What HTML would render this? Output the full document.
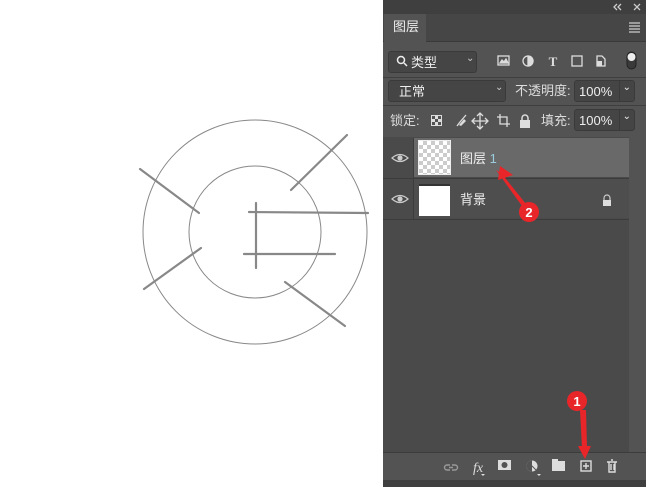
<!DOCTYPE html>
<html><head><meta charset="utf-8"><style>
*{margin:0;padding:0;box-sizing:border-box}
body{width:646px;height:487px;background:#fff;position:relative;overflow:hidden;font-family:"Liberation Sans","Noto Sans CJK SC",sans-serif;font-size:12px;color:#ddd}
.a{position:absolute;line-height:1}
.box{position:absolute;border:1px solid #3a3a3a;background:#454545;border-radius:3px;line-height:1}
</style></head><body>
<svg class="a" style="left:0;top:0" width="383" height="487">
<g fill="none" stroke="#888" stroke-width="1"><circle cx="255" cy="232" r="112"/><circle cx="255" cy="232" r="66"/></g>
<g stroke="#888" stroke-width="2.2" stroke-linecap="round">
<line x1="140" y1="169" x2="199" y2="213"/><line x1="347" y1="135" x2="291" y2="190"/>
<line x1="144" y1="289" x2="201" y2="248"/><line x1="285" y1="282" x2="345" y2="326"/>
<line x1="249" y1="212" x2="368" y2="213"/><line x1="256" y1="203" x2="256" y2="268"/>
<line x1="244" y1="254" x2="335" y2="254"/></g>
</svg>
<div class="a" style="left:383px;top:0;width:263px;height:487px;background:#535353"></div>
<div class="a" style="left:383px;top:0;width:263px;height:14px;background:#3f3f3f"></div>
<div class="a" style="left:383px;top:14px;width:263px;height:28px;background:#464646;border-bottom:1px solid #3a3a3a"></div>
<div class="a" style="left:384px;top:14px;width:42px;height:28px;background:#535353;padding:6px 0 0 9px;font-size:13px;color:#eee">图层</div>
<div class="box" style="left:388px;top:51px;width:89px;height:22px;padding:4px 0 0 22px;font-size:13px;color:#eee">类型</div>
<div class="a" style="left:466px;top:54px;font-size:10px;color:#ccc">⌄</div>
<div class="a" style="left:383px;top:77px;width:263px;height:1px;background:#3f3f3f"></div>
<div class="box" style="left:388px;top:80px;width:118px;height:22px;padding:4px 0 0 10px;font-size:13px;color:#eee">正常</div>
<div class="a" style="left:495px;top:83px;font-size:10px;color:#ccc">⌄</div>
<div class="a" style="left:515px;top:84px;font-size:13px;color:#ddd">不透明度:</div>
<div class="box" style="left:574px;top:80px;width:61px;height:22px;padding:4px 0 0 4px;font-size:13px;color:#eee">100%<span style="position:absolute;left:44px;top:0;width:1px;height:20px;background:#3a3a3a"></span><span style="position:absolute;right:3px;top:2px;font-size:10px">⌄</span></div>
<div class="a" style="left:383px;top:105px;width:263px;height:1px;background:#3f3f3f"></div>
<div class="a" style="left:390px;top:114px;font-size:13px;color:#ddd">锁定:</div>
<div class="a" style="left:541px;top:114px;font-size:13px;color:#ddd">填充:</div>
<div class="box" style="left:574px;top:109px;width:61px;height:22px;padding:4px 0 0 4px;font-size:13px;color:#eee">100%<span style="position:absolute;left:44px;top:0;width:1px;height:20px;background:#3a3a3a"></span><span style="position:absolute;right:3px;top:2px;font-size:10px">⌄</span></div>
<div class="a" style="left:383px;top:137px;width:263px;height:315px;background:#4a4a4a"></div>
<div class="a" style="left:629px;top:137px;width:17px;height:315px;background:#535353"></div>
<div class="a" style="left:413px;top:138px;width:216px;height:39px;background:#696969"></div>
<div class="a" style="left:383px;top:178px;width:246px;height:1px;background:#3c3c3c"></div>
<div class="a" style="left:413px;top:179px;width:216px;height:39px;background:#4e4e4e"></div>
<div class="a" style="left:383px;top:219px;width:246px;height:1px;background:#3c3c3c"></div>
<div class="a" style="left:413px;top:138px;width:1px;height:82px;background:#3c3c3c"></div>
<div class="a" style="left:418px;top:140px;width:33px;height:35px;border:1px solid #eee;background:repeating-conic-gradient(#ccc 0 25%,#fff 0 50%) 0 0/8px 8px"></div>
<div class="a" style="left:419px;top:184px;width:31px;height:32px;background:#fff;border-top:2px solid #333"></div>
<div class="a" style="left:460px;top:152px;font-size:13px;color:#f0f0f0">图层 <span style="color:#9cd">1</span></div>
<div class="a" style="left:460px;top:193px;font-size:13px;color:#f0f0f0">背景</div>
<div class="a" style="left:383px;top:452px;width:263px;height:1px;background:#3c3c3c"></div>
<div class="a" style="left:383px;top:480px;width:263px;height:7px;background:#3f3f3f"></div>
<svg class="a" style="left:383px;top:0" width="263" height="487">
<g fill="none" stroke="#ccc" stroke-width="1.3">
<path d="M234 4l-3 3 3 3M238 4l-3 3 3 3"/><path d="M251 4l6 6M257 4l-6 6"/>
<path d="M246 23h11M246 26h11M246 29h11M246 32h11"/>
</g>
<g fill="none" stroke="#eee" stroke-width="1.5"><circle cx="18" cy="60" r="3.5"/><path d="M21 63l3 3"/></g>
<g fill="none" stroke="#ddd" stroke-width="1.3">
<rect x="115" y="56" width="11" height="9"/><path d="M117 63l2-3 2 2 2-3 2 4z" fill="#ddd"/>
<circle cx="145" cy="61" r="5"/><path d="M145 56a5 5 0 0 1 0 10z" fill="#ddd"/>
<rect x="189" y="56" width="10" height="10"/>
<path d="M214 56h5l3 3v7h-8z"/>
<path d="M83 115l-6 7M77 122l-3 4"/>
<path d="M90 121h14M97 114v14M94 116l3-3 3 3M94 126l3 3 3-3M92 118l-3 3 3 3M102 118l3 3-3 3"/>
<path d="M117 114v10h10M114 117h10v10"/>
</g>
<g fill="#ddd"><text x="170" y="66" font-size="13" font-weight="bold" font-family="Liberation Serif" text-anchor="middle">T</text>
<rect x="214" y="61" width="5" height="5"/>
<rect x="48" y="115" width="11" height="11"/>
<rect x="137" y="120" width="10" height="8"/>
</g>
<g fill="#535353"><rect x="49" y="116" width="3" height="3"/><rect x="55" y="116" width="3" height="3"/><rect x="52" y="119" width="3" height="3"/><rect x="49" y="122" width="3" height="3"/><rect x="55" y="122" width="3" height="3"/></g>
<path d="M139 120v-2a3 3 0 0 1 6 0v2" fill="none" stroke="#ddd" stroke-width="1.5"/>
<path d="M76 125l5-6 2 2-5 5z" fill="#ddd"/>
<rect x="244" y="52" width="9" height="17" rx="4.5" fill="#3a3a3a" stroke="#222"/><circle cx="248.5" cy="57" r="4" fill="#eee"/>
<g fill="none" stroke="#ccc" stroke-width="1.2">
<path d="M9 158q8-7 16 0q-8 7-16 0z"/><circle cx="17" cy="158" r="2" fill="#ccc"/>
<path d="M9 199q8-7 16 0q-8 7-16 0z"/><circle cx="17" cy="199" r="2" fill="#ccc"/>
<rect x="220" y="200" width="8" height="6" fill="#ddd" stroke="none"/><path d="M221 200v-2a3 3 0 0 1 6 0v2"/>
</g>
<g fill="none" stroke="#ddd" stroke-width="1.4">
<path d="M67 465h-3a2.5 2.5 0 0 0 0 5h3M69 465h3a2.5 2.5 0 0 1 0 5h-3M66 467.5h4" stroke="#999"/>
<rect x="198" y="461" width="10" height="10"/><path d="M203 463v6M200 466h6"/>
<path d="M224 462h10M226 462v10h6v-10M228 460h2M228 464v6M231 464v6"/>
</g>
<g fill="#ddd">
<text x="90" y="472" font-size="14" font-style="italic" font-family="Liberation Serif">fx</text>
<rect x="115" y="460" width="13" height="10"/><circle cx="149" cy="466" r="5.5"/><rect x="169" y="461" width="13" height="10"/>
<path d="M98 474h4l-2 2z"/><path d="M154 474h4l-2 2z"/>
</g>
<rect x="169" y="459" width="6" height="3" fill="#ddd"/>
<circle cx="121.5" cy="465" r="3" fill="#535353"/><path d="M149 460.5a5.5 5.5 0 0 0 0 11z" fill="#535353"/><path d="M145 462l8 8" stroke="#535353" stroke-width="1"/>
</svg>
<svg class="a" style="left:0;top:0" width="646" height="487">
<g fill="#e8262a"><polygon points="502,174 496,170 522,206 526,204"/><polygon points="500,166 513,175 498,180"/>
<polygon points="580,410 586,410 587,448 582,448"/><polygon points="578,446 591,446 585,459"/></g>
<circle cx="529" cy="212" r="10" fill="#e8262a"/><circle cx="577" cy="401" r="10" fill="#e8262a"/>
<text x="529" y="217" fill="#fff" font-size="13" font-weight="bold" text-anchor="middle" font-family="Liberation Sans">2</text>
<text x="577" y="406" fill="#fff" font-size="13" font-weight="bold" text-anchor="middle" font-family="Liberation Sans">1</text>
</svg>
</body></html>
